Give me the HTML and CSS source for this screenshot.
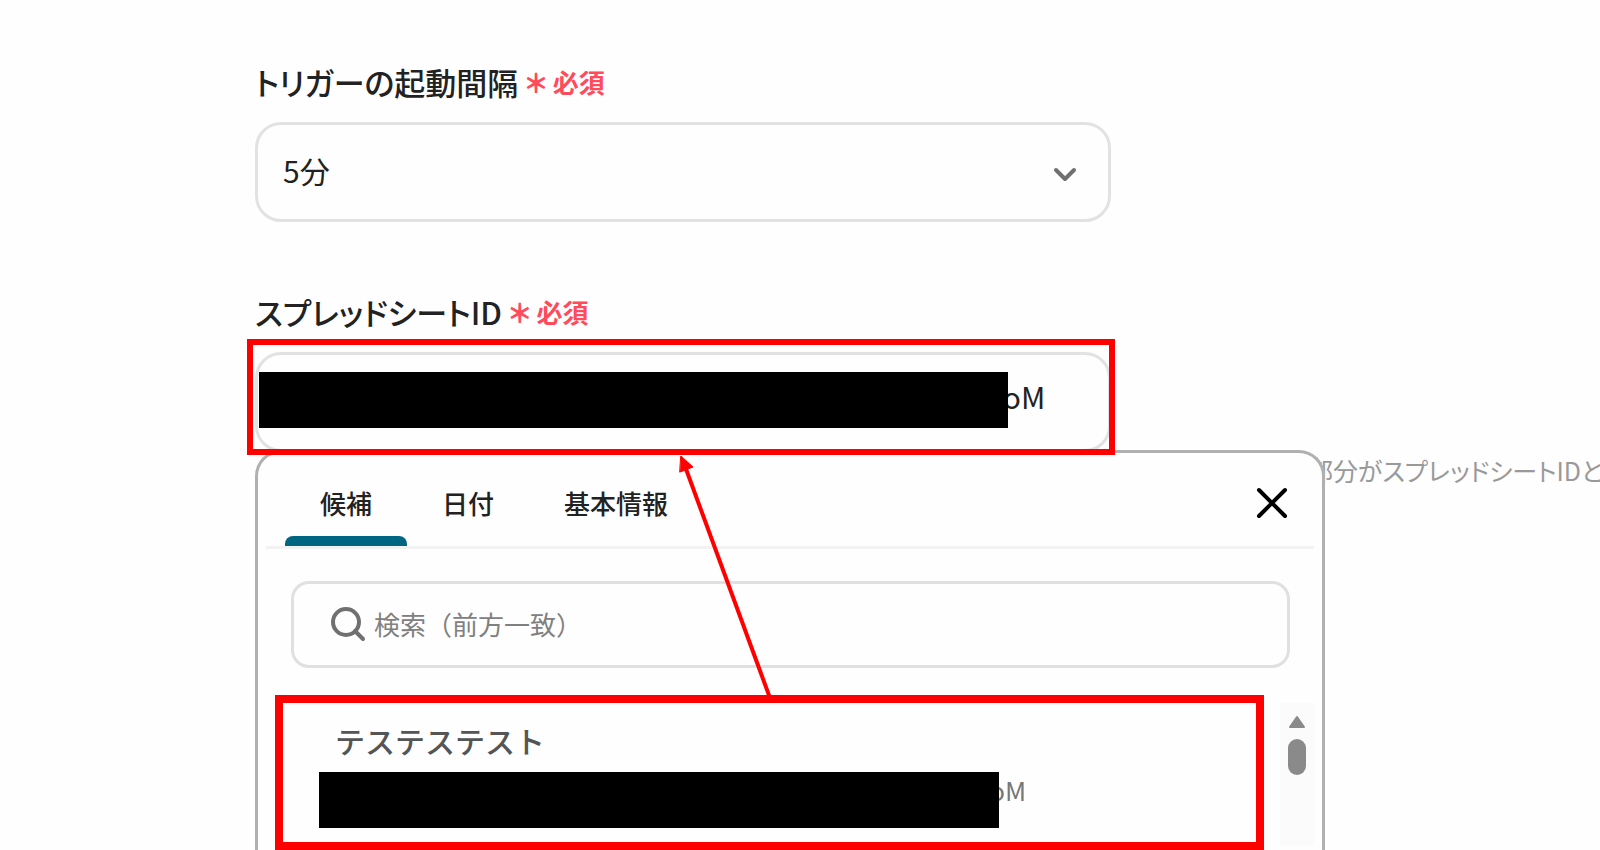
FILE: index.html
```html
<!DOCTYPE html>
<html lang="ja">
<head>
    <meta charset="UTF-8">
    <meta name="viewport" content="width=device-width, initial-scale=1.0">
    <title>トリガー設定</title>
    <link rel="stylesheet" href="styles.css">
</head>
<body>
    <form class="trigger-form">
        <div class="field">
            <label for="interval">トリガーの起動間隔<span class="required"><span class="mark">＊</span>必須</span></label>
            <div class="control">
                <select id="interval" name="interval">
                    <option>5分</option>
                </select>
                <svg class="chevron" viewBox="0 0 24 16" aria-hidden="true">
                    <path d="M3 3l9 9 9-9"/>
                </svg>
            </div>
        </div>

        <div class="field">
            <label for="sheetId">スプレッドシートID<span class="required"><span class="mark">＊</span>必須</span></label>
            <div class="control">
                <input type="text" id="sheetId" class="sheet-id" name="sheetId" value="oM">
                <div class="redacted"></div>
                <div class="highlight"></div>
            </div>
            <p class="hint">部分がスプレッドシートIDとな</p>

            <div class="panel">
                <div class="tabs">
                    <button type="button" class="tab active">候補</button>
                    <button type="button" class="tab">日付</button>
                    <button type="button" class="tab">基本情報</button>
                    <button type="button" class="close" aria-label="閉じる">
                        <svg viewBox="0 0 32 32" aria-hidden="true">
                            <path d="M3 3l26 26M29 3L3 29"/>
                        </svg>
                    </button>
                </div>

                <div class="search">
                    <svg viewBox="0 0 36 36" aria-hidden="true">
                        <circle cx="16" cy="16" r="13"/>
                        <path d="M25 25l8 8"/>
                    </svg>
                    <input type="text" placeholder="検索（前方一致）" aria-label="検索">
                </div>

                <div class="results">
                    <button type="button" class="option">
                        <span class="option-name">テステステスト</span>
                        <span class="option-id"><span class="bar"></span><span class="tail">oM</span></span>
                    </button>
                    <div class="scrollbar">
                        <svg viewBox="0 0 18 14" aria-hidden="true">
                            <path d="M9 2l7 10H2z"/>
                        </svg>
                        <div class="thumb"></div>
                    </div>
                </div>

                <svg class="arrow" viewBox="0 0 100 242" aria-hidden="true">
                    <path class="line" d="M97 242L13 13"/>
                    <path class="head" d="M8 0l12 11-13 5z"/>
                </svg>
            </div>
        </div>
    </form>
</body>
</html>
```

FILE: styles.css
```css
* {
    box-sizing: border-box;
}

body {
    font-family: "Noto Sans CJK JP", sans-serif;
    background-color: #fefefe;
    color: #222;
    margin: 0;
    height: 100vh;
    overflow: hidden;
}

button, input, select {
    font-family: inherit;
    color: inherit;
}

button {
    background: none;
    border: none;
    padding: 0;
    cursor: pointer;
}

svg {
    fill: none;
    stroke-linecap: round;
    stroke-linejoin: round;
}

.trigger-form {
    width: 54%;
    max-width: 856px;
    margin-left: 15.94%;
    padding-top: 60px;
}

.field {
    position: relative;
    margin-bottom: 68px;
}

label {
    display: flex;
    align-items: center;
    height: 42px;
    margin-bottom: 20px;
    font-size: 31px;
    font-weight: 500;
    font-feature-settings: "palt";
}

.required {
    margin-left: 7px;
    color: #ff4b5c;
    font-size: 26px;
    font-weight: 700;
}

.mark {
    margin-right: 6px;
    font-weight: 900;
}

.control {
    position: relative;
}

select, .sheet-id {
    display: block;
    width: 100%;
    height: 100px;
    padding: 0 25px 5px;
    appearance: none;
    background: #fefefe;
    border: 3px solid #e2e2e2;
    border-radius: 26px;
    font-size: 30px;
}

.chevron {
    position: absolute;
    right: 34px;
    top: 45px;
    width: 24px;
    stroke: #707070;
    stroke-width: 4;
}

.sheet-id {
    padding: 0 30px 12px 87%;
}

.redacted {
    position: absolute;
    top: 20px;
    left: 4px;
    right: 12%;
    height: 56px;
    background: #000;
}

.highlight {
    position: absolute;
    inset: -13px -4px -3px -8px;
    border: 6px solid #f00;
    z-index: 2;
}

.hint {
    margin: 0;
    position: absolute;
    top: 162px;
    left: 123%;
    white-space: nowrap;
    color: #999;
    font-size: 25px;
    line-height: 36px;
    font-feature-settings: "palt";
}

/* suggestion panel */
.panel {
    position: absolute;
    top: 160px;
    left: 0;
    width: 125%;
    background: #fefefe;
    border: 3px solid #b0b0b0;
    border-bottom: none;
    border-radius: 26px 26px 0 0;
}

.tabs {
    display: flex;
    margin: 0 8px;
    padding: 0 26px 0 19px;
    height: 96px;
    border-bottom: 3px solid #f2f2f2;
}

.tab {
    position: relative;
    padding: 6px 35px 0;
    font-size: 26px;
    font-weight: 500;
}

.tab.active::after {
    content: "";
    position: absolute;
    left: 0;
    right: 0;
    bottom: 0;
    height: 10px;
    background: #006580;
    border-radius: 8px 8px 0 0;
}

.close {
    margin: 6px 0 0 auto;
}

.close svg {
    display: block;
    width: 32px;
    stroke: #000;
    stroke-width: 4;
}

.search {
    display: flex;
    align-items: center;
    gap: 8px;
    height: 87px;
    margin: 32px 32px 0 33px;
    padding: 0 36px 2px;
    border: 3px solid #e0e0e0;
    border-radius: 18px;
}

.search svg {
    width: 36px;
    stroke: #707070;
    stroke-width: 4;
}

.search input {
    flex: 1;
    border: none;
    outline: none;
    padding: 0;
    background: none;
    font-size: 26px;
}

.search input::placeholder {
    color: #808080;
}

.results {
    display: flex;
    justify-content: space-between;
    margin: 27px 8px 0 17px;
}

.option {
    flex: 1;
    margin-right: 16px;
    height: 155px;
    padding: 0 36px;
    border: 8px solid #f00;
    text-align: left;
}

.option-name {
    display: block;
    margin: 0 0 10px 16px;
    color: #555;
    font-size: 30px;
    font-weight: 500;
    line-height: 44px;
}

.option-id {
    display: flex;
}

.bar {
    position: relative;
    width: 75.5%;
    height: 56px;
    background: #000;
    z-index: 1;
}

.tail {
    margin-left: -10px;
    color: #777;
    font-size: 26px;
    line-height: 36px;
}

.scrollbar {
    display: flex;
    flex-direction: column;
    align-items: center;
    gap: 10px;
    width: 34px;
    margin: 8px 0 4px;
    padding-top: 12px;
    background: #fbfbfb;
}

.scrollbar svg {
    width: 18px;
    fill: #8a8a8a;
    stroke: #8a8a8a;
    stroke-width: 2;
}

.thumb {
    width: 18px;
    height: 36px;
    background: #8a8a8a;
    border-radius: 9px;
}

/* arrow from the option up to the input */
.arrow {
    position: absolute;
    top: 3px;
    left: 39%;
    width: 100px;
    z-index: 3;
}

.arrow .line {
    stroke: #f00;
    stroke-width: 4;
}

.arrow .head {
    fill: #f00;
    stroke: #f00;
}
```
